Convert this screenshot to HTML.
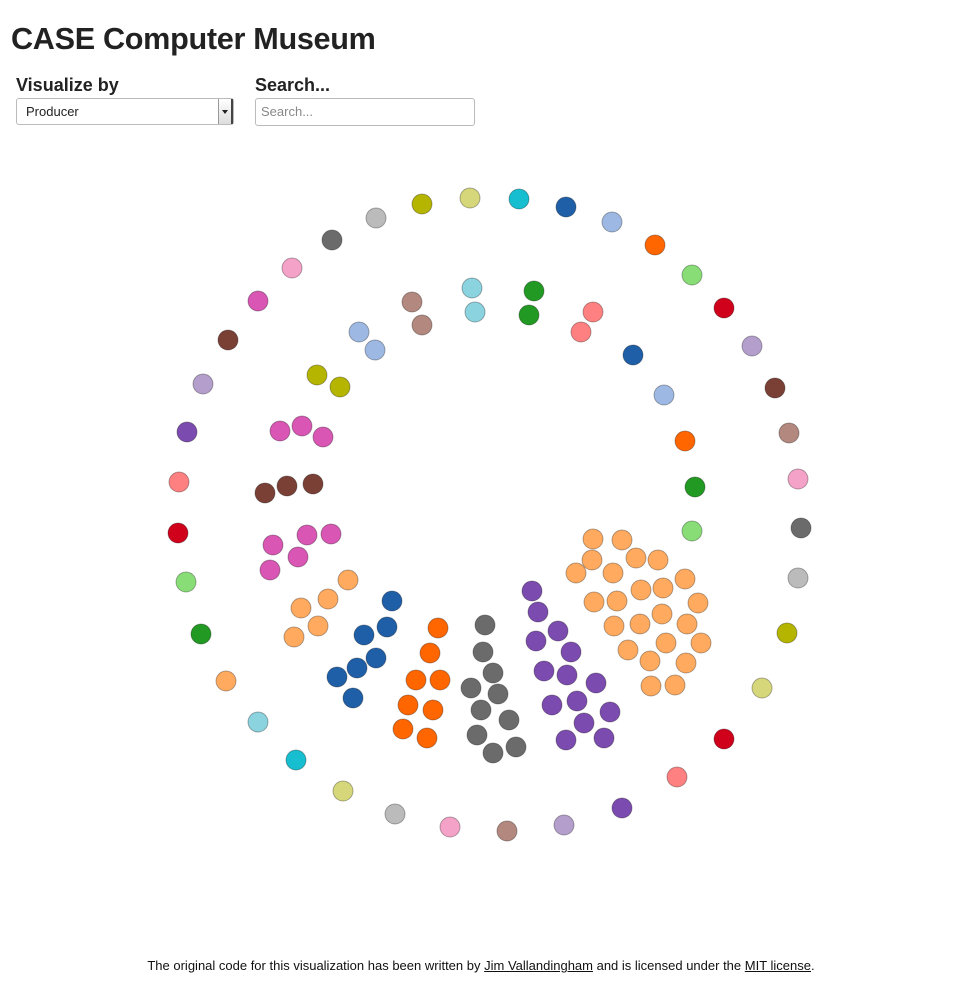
<!DOCTYPE html><html><head><meta charset="utf-8"><style>
body{margin:0;background:#fff;font-family:"Liberation Sans",sans-serif;color:#222;width:959px;height:1004px;position:relative;overflow:hidden}
h1{position:absolute;left:11px;top:22px;margin:0;font-size:30.6px;font-weight:bold;letter-spacing:-0.3px}
.lab{position:absolute;top:75px;font-size:18px;font-weight:bold}
.sel{position:absolute;left:16px;top:98px;width:218px;height:27px;border:1px solid #bbb;border-radius:3px;box-sizing:border-box;font-size:13px;line-height:26px;padding-left:9px}
.sel:after{content:"";position:absolute;right:0;top:0;width:12px;height:25px;border-left:1px solid #999;border-right:2px solid #444;background:linear-gradient(#fff,#ddd)}
.sel i{position:absolute;right:5px;top:11px;z-index:2;border:3px solid transparent;border-top:4px solid #222}
.inp{position:absolute;left:255px;top:98px;width:220px;height:28px;border:1px solid #bbb;border-radius:3px;box-sizing:border-box;font-size:13px;color:#888;line-height:26px;padding-left:5px}
.ft{position:absolute;top:958px;left:0;width:962px;text-align:center;font-size:13px;color:#111}
.ft a{color:#111;text-decoration:underline}
svg{position:absolute;left:0;top:0}
circle{stroke-width:1}
</style></head><body>
<h1>CASE Computer Museum</h1>
<div class="lab" style="left:16px">Visualize by</div>
<div class="lab" style="left:255px">Search...</div>
<div class="sel">Producer<i></i></div>
<div class="inp">Search...</div>
<svg width="959" height="1004" id="s"></svg>
<div class="ft">The original code for this visualization has been written by <a>Jim Vallandingham</a> and is licensed under the <a>MIT license</a>.</div>
<script>
var C={g:"#bbbbbb",o:"#b5b500",y:"#d6d67a",c:"#17becf",b:"#1f5fa8",lb:"#9cb8e3",or:"#ff6600",lg:"#88dd77",r:"#d0011b",lp:"#b49fcc",br:"#7a4036",lbr:"#b3887e",pk:"#f4a2c8",dg:"#6b6b6b",sa:"#ff8080",p:"#7c4bb0",lc:"#8ad3df",lo:"#ffaa5e",gr:"#229922",m:"#d956b4"};
var d=[[376,218,"g"],[422,204,"o"],[470,198,"y"],[519,199,"c"],[566,207,"b"],[612,222,"lb"],[655,245,"or"],[692,275,"lg"],[724,308,"r"],[752,346,"lp"],[775,388,"br"],[789,433,"lbr"],[798,479,"pk"],[801,528,"dg"],[798,578,"g"],[787,633,"o"],[762,688,"y"],[724,739,"r"],[677,777,"sa"],[622,808,"p"],[564,825,"lp"],[507,831,"lbr"],[450,827,"pk"],[395,814,"g"],[343,791,"y"],[296,760,"c"],[258,722,"lc"],[226,681,"lo"],[201,634,"gr"],[186,582,"lg"],[178,533,"r"],[179,482,"sa"],[187,432,"p"],[203,384,"lp"],[228,340,"br"],[258,301,"m"],[292,268,"pk"],[332,240,"dg"],
[412,302,"lbr"],[422,325,"lbr"],[472,288,"lc"],[475,312,"lc"],[534,291,"gr"],[529,315,"gr"],[593,312,"sa"],[581,332,"sa"],[633,355,"b"],[664,395,"lb"],[685,441,"or"],[695,487,"gr"],[692,531,"lg"],[359,332,"lb"],[375,350,"lb"],[317,375,"o"],[340,387,"o"],[280,431,"m"],[302,426,"m"],[323,437,"m"],[265,493,"br"],[287,486,"br"],[313,484,"br"]];
[[307,535],[331,534],[273,545],[298,557],[270,570]].forEach(p=>d.push([p[0],p[1],"m"]));
[[348,580],[328,599],[301,608],[318,626],[294,637]].forEach(p=>d.push([p[0],p[1],"lo"]));
[[392,601],[387,627],[364,635],[376,658],[357,668],[337,677],[353,698]].forEach(p=>d.push([p[0],p[1],"b"]));
[[438,628],[430,653],[416,680],[440,680],[408,705],[433,710],[403,729],[427,738]].forEach(p=>d.push([p[0],p[1],"or"]));
[[485,625],[483,652],[493,673],[471,688],[498,694],[481,710],[509,720],[477,735],[516,747],[493,753]].forEach(p=>d.push([p[0],p[1],"dg"]));
[[532,591],[538,612],[558,631],[536,641],[571,652],[544,671],[567,675],[596,683],[577,701],[552,705],[610,712],[584,723],[566,740],[604,738]].forEach(p=>d.push([p[0],p[1],"p"]));
[[593,539],[622,540],[592,560],[636,558],[658,560],[576,573],[613,573],[641,590],[663,588],[685,579],[594,602],[617,601],[698,603],[640,624],[662,614],[614,626],[687,624],[701,643],[628,650],[666,643],[650,661],[686,663],[651,686],[675,685]].forEach(p=>d.push([p[0],p[1],"lo"]));
var h="";d.forEach(p=>{h+='<circle cx="'+p[0]+'" cy="'+p[1]+'" r="10" fill="'+C[p[2]]+'" stroke="rgba(0,0,0,0.3)"/>';});
document.getElementById("s").innerHTML=h;
</script>
</body></html>
